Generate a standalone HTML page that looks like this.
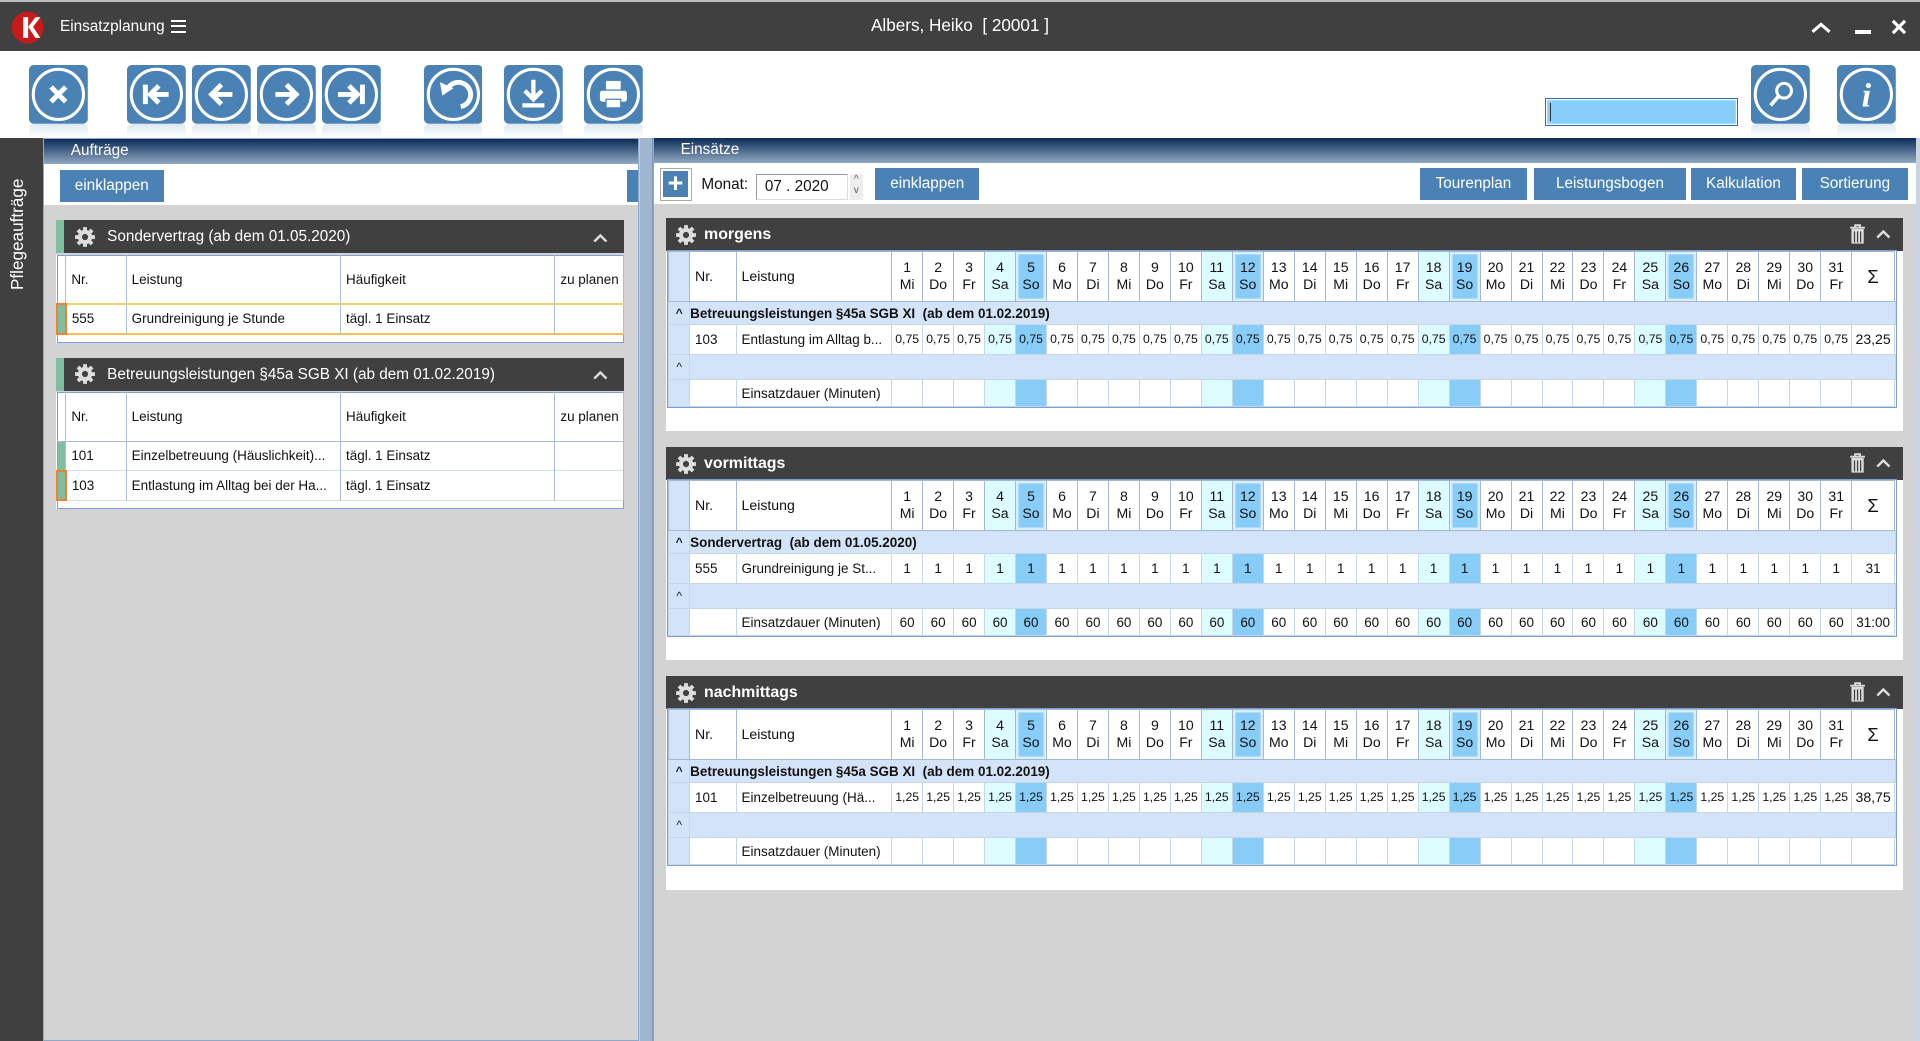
<!DOCTYPE html>
<html><head><meta charset="utf-8">
<style>
*{box-sizing:border-box;margin:0;padding:0}
html,body{width:1920px;height:1040px;overflow:hidden}
body{zoom:1.22449;width:1568px;height:850px;position:relative;background:#d3d3d3;font-family:"Liberation Sans",Arial,sans-serif;color:#111}
.abs{position:absolute}
#title{left:0;top:0;width:1568px;height:42px;background:#404040;border-top:2px solid #bdbdbd;color:#fff}
#tool{left:0;top:42px;width:1568px;height:71px;background:#fff}
.btn{position:absolute;top:11px;width:48px;height:60px}
.btn .r{position:absolute;left:0;top:48px;width:48px;height:12px;background:linear-gradient(#dfe8f1,#fff);border-radius:4px 4px 0 0}
.hdr{background:linear-gradient(#0b2c58,#90a8c2);color:#fff;font-size:12.5px;height:20px;line-height:20px;padding-left:22px}
.bb{position:absolute;background:#4a82b6;color:#fff;font-size:12.5px;text-align:center;line-height:26px;height:26px}
.gh{position:absolute;background:#404040;color:#fff;height:27px;line-height:27px}
.gear{display:inline-block;width:18px;height:18px;vertical-align:middle}
table{border-collapse:collapse;table-layout:fixed}
.lt{position:absolute;left:46px;width:464px;background:#fff;border:1px solid #7f9fd0;font-size:11px}
.lt td{border-right:1px solid #a9bcd8;padding-left:4px;white-space:nowrap;overflow:hidden}
.rt{width:1003px;font-size:11px}
.rt td{border:1px solid #c6d6ea;text-align:center;white-space:nowrap;overflow:hidden;padding:0}
.rt tr.hd td{border-color:#a4b8d4;height:41px;font-size:11.5px;line-height:14px}
.rt td.e{background:#d4e4f8}
.rt td.s{background:#dcfcff}
.rt td.u{background:#88cdf8}
.rt tr.hd td.u{box-shadow:inset 0 0 0 2px #d8eefc}
.rt tr.g td{background:#d4e4f8;height:19px;text-align:left;font-weight:bold;font-size:11px}
.rt tr.g td.e{text-align:center;font-size:10px;color:#123}
.rt tr.v td{height:24px;font-size:10px}
.rt tr.v.w td{font-size:11px}
.rt tr.m td{height:22px}
.rt td.l{text-align:left;padding-left:4px}
.rt tr.g2 td{background:#d4e4f8;height:21px}
.rt tr.g2 td.e{font-size:10px;color:#123}
.sec{position:absolute;left:544px;width:1010px;background:#fff}
.sec .gh{left:0;top:0;width:1010px;font-weight:bold;font-size:13px}
.sec .tw{position:absolute;left:1px;top:26px;border:1px solid #7f9fd0}
col.d{width:25.3px}
</style></head><body>

<div id="title" class="abs">
 <svg class="abs" style="left:9px;top:7px" width="27" height="27" viewBox="0 0 27 27"><circle cx="13.5" cy="13.5" r="13" fill="#c81a1a"/><path d="M10 5h4v17h-4z" fill="#fff"/><path d="M14 13l6-8h4l-6 8 6 9h-4z" fill="#fff"/></svg>
 <div class="abs" style="left:49px;top:13px;font-size:12.5px">Einsatzplanung</div>
 <div class="abs" style="left:140px;top:15px;width:12px;height:10px;border-top:2px solid #fff;border-bottom:2px solid #fff"><div style="margin-top:2px;height:2px;background:#fff"></div></div>
 <div class="abs" style="left:0;width:1568px;top:11px;text-align:center;font-size:14px">Albers, Heiko&nbsp; [ 20001 ]</div>
 <svg class="abs" style="left:1478px;top:16px" width="18" height="10"><path d="M2 8l7-6 7 6" stroke="#fff" stroke-width="2.5" fill="none"/></svg>
 <div class="abs" style="left:1515px;top:23px;width:13px;height:3px;background:#fff"></div>
 <svg class="abs" style="left:1544px;top:14px" width="13" height="13"><path d="M1.5 1.5l10 10M11.5 1.5l-10 10" stroke="#fff" stroke-width="2.6"/></svg>
</div>

<div id="tool" class="abs">
 <div class="btn" style="left:24px"><svg width="48" height="48"><rect width="48" height="48" rx="4" fill="#4a82b6"/><circle cx="24" cy="24" r="20.5" stroke="#fff" stroke-width="2.5" fill="none"/><path d="M18 18l12 12M30 18l-12 12" stroke="#fff" stroke-width="4"/></svg><div class="r"></div></div>
 <div class="btn" style="left:104px"><svg width="48" height="48"><rect width="48" height="48" rx="4" fill="#4a82b6"/><circle cx="24" cy="24" r="20.5" stroke="#fff" stroke-width="2.5" fill="none"/><path d="M15 16v16M34 24H20M26 17l-7 7 7 7" stroke="#fff" stroke-width="4" fill="none"/></svg><div class="r"></div></div>
 <div class="btn" style="left:157px"><svg width="48" height="48"><rect width="48" height="48" rx="4" fill="#4a82b6"/><circle cx="24" cy="24" r="20.5" stroke="#fff" stroke-width="2.5" fill="none"/><path d="M33 24H16M24 16l-8 8 8 8" stroke="#fff" stroke-width="4" fill="none"/></svg><div class="r"></div></div>
 <div class="btn" style="left:210px"><svg width="48" height="48"><rect width="48" height="48" rx="4" fill="#4a82b6"/><circle cx="24" cy="24" r="20.5" stroke="#fff" stroke-width="2.5" fill="none"/><path d="M15 24h17M24 16l8 8-8 8" stroke="#fff" stroke-width="4" fill="none"/></svg><div class="r"></div></div>
 <div class="btn" style="left:263px"><svg width="48" height="48"><rect width="48" height="48" rx="4" fill="#4a82b6"/><circle cx="24" cy="24" r="20.5" stroke="#fff" stroke-width="2.5" fill="none"/><path d="M13 24h15M22 17l7 7-7 7M33 16v16" stroke="#fff" stroke-width="4" fill="none"/></svg><div class="r"></div></div>
 <div class="btn" style="left:346px"><svg width="48" height="48"><rect width="48" height="48" rx="4" fill="#4a82b6"/><circle cx="24" cy="24" r="20.5" stroke="#fff" stroke-width="2.5" fill="none"/><path d="M30 34A10 10 0 1 0 19 20" stroke="#fff" stroke-width="4" fill="none"/><path d="M13 14l2 11 9-6z" fill="#fff"/></svg><div class="r"></div></div>
 <div class="btn" style="left:412px"><svg width="48" height="48"><rect width="48" height="48" rx="4" fill="#4a82b6"/><circle cx="24" cy="24" r="20.5" stroke="#fff" stroke-width="2.5" fill="none"/><path d="M24 12v15M17 21l7 7 7-7M15 33h18" stroke="#fff" stroke-width="3.5" fill="none"/></svg><div class="r"></div></div>
 <div class="btn" style="left:477px"><svg width="48" height="48"><rect width="48" height="48" rx="4" fill="#4a82b6"/><circle cx="24" cy="24" r="20.5" stroke="#fff" stroke-width="2.5" fill="none"/><rect x="18" y="13" width="12" height="7" fill="#fff"/><rect x="13" y="21" width="22" height="9" rx="2" fill="#fff"/><rect x="18" y="28" width="12" height="7" fill="#fff" stroke="#4a82b6" stroke-width="1"/></svg><div class="r"></div></div>
 <div class="abs" style="left:1262px;top:38px;width:157px;height:23px;border:1px solid #1e6fd0;background:#87cefa;box-shadow:inset 0 0 0 1px #fff"><div style="position:absolute;left:3px;top:3px;width:1px;height:15px;background:#333"></div></div>
 <div class="btn" style="left:1430px"><svg width="48" height="48"><rect width="48" height="48" rx="4" fill="#4a82b6"/><circle cx="24" cy="24" r="20.5" stroke="#fff" stroke-width="2.5" fill="none"/><circle cx="27" cy="21" r="6" stroke="#fff" stroke-width="2.5" fill="none"/><path d="M23 25l-7 8" stroke="#fff" stroke-width="3"/></svg><div class="r"></div></div>
 <div class="btn" style="left:1500px"><svg width="48" height="48"><rect width="48" height="48" rx="4" fill="#4a82b6"/><circle cx="24" cy="24" r="20.5" stroke="#fff" stroke-width="2.5" fill="none"/><text x="24" y="34" text-anchor="middle" font-family="Liberation Serif,serif" font-style="italic" font-weight="bold" font-size="28" fill="#fff">i</text></svg><div class="r"></div></div>
</div>

<!-- sidebar -->
<div class="abs" style="left:0;top:113px;width:35px;height:737px;background:#404040"></div>
<div class="abs" style="left:6px;top:237px;transform:rotate(-90deg);transform-origin:0 0;color:#fff;font-size:14px;width:120px">Pflegeaufträge</div>

<!-- left panel -->
<div class="abs" style="left:35px;top:113px;width:487px;height:737px;background:#d3d3d3;border:1px solid #8fa8c8">
 <div class="hdr">Aufträge</div>
 <div style="height:34px;background:#fff;position:relative">
  <div class="bb" style="left:13px;top:5px;width:85px">einklappen</div>
  <div class="abs" style="left:476px;top:5px;width:9px;height:26px;background:#4a82b6"></div>
 </div>
</div>
<div class="abs" style="left:522px;top:113px;width:11px;height:737px;background:#9fb5d0;border-left:1px solid #c0cfe0;border-right:1px solid #7f97b6"></div>

<div class="gh" style="left:46px;top:180px;width:464px;font-size:12.5px;border-left:7px solid #7fbf9f"><svg class="gear" style="margin:0 9px 0 8px" viewBox="0 0 20 20"><g fill="#ddd"><circle cx="10" cy="10" r="6.5"/><g stroke="#ddd" stroke-width="3.5"><path d="M10 1v18M1 10h18M3.6 3.6l12.8 12.8M16.4 3.6L3.6 16.4"/></g></g><circle cx="10" cy="10" r="2.8" fill="#404040"/></svg>Sondervertrag (ab dem 01.05.2020)<svg class="abs" style="left:432px;top:10px" width="12" height="8"><path d="M1 7l5-5 5 5" stroke="#ddd" stroke-width="2" fill="none"/></svg></div>
<table class="lt" style="top:208px;height:72px"><colgroup><col style="width:7px"><col style="width:49px"><col style="width:174px"><col style="width:174px"><col style="width:56px"></colgroup>
<tr style="height:40px"><td style="padding:0"></td><td>Nr.</td><td>Leistung</td><td>Häufigkeit</td><td>zu planen</td></tr>
<tr style="height:24px;border-top:2px solid #f5d070;border-bottom:2px solid #f5c050"><td style="padding:0;background:#7fbf9f;border:2px solid #f08030"></td><td>555</td><td>Grundreinigung je Stunde</td><td>tägl. 1 Einsatz</td><td></td></tr>
<tr><td colspan="5" style="border:0"></td></tr></table>

<div class="gh" style="left:46px;top:292px;width:464px;font-size:12.5px;border-left:7px solid #7fbf9f"><svg class="gear" style="margin:0 9px 0 8px" viewBox="0 0 20 20"><g fill="#ddd"><circle cx="10" cy="10" r="6.5"/><g stroke="#ddd" stroke-width="3.5"><path d="M10 1v18M1 10h18M3.6 3.6l12.8 12.8M16.4 3.6L3.6 16.4"/></g></g><circle cx="10" cy="10" r="2.8" fill="#404040"/></svg>Betreuungsleistungen §45a SGB XI (ab dem 01.02.2019)<svg class="abs" style="left:432px;top:10px" width="12" height="8"><path d="M1 7l5-5 5 5" stroke="#ddd" stroke-width="2" fill="none"/></svg></div>
<table class="lt" style="top:320px;height:96px"><colgroup><col style="width:7px"><col style="width:49px"><col style="width:174px"><col style="width:174px"><col style="width:56px"></colgroup>
<tr style="height:40px;border-bottom:1px solid #a9bcd8"><td style="padding:0"></td><td>Nr.</td><td>Leistung</td><td>Häufigkeit</td><td>zu planen</td></tr>
<tr style="height:24px;border-bottom:1px solid #d4e0ee"><td style="padding:0;background:#7fbf9f"></td><td>101</td><td>Einzelbetreuung (Häuslichkeit)...</td><td>tägl. 1 Einsatz</td><td></td></tr>
<tr style="height:24px;border-bottom:1px solid #d4e0ee"><td style="padding:0;background:#7fbf9f;border:2px solid #f08030"></td><td>103</td><td>Entlastung im Alltag bei der Ha...</td><td>tägl. 1 Einsatz</td><td></td></tr>
<tr><td colspan="5" style="border:0"></td></tr></table>

<!-- right panel -->
<div class="abs" style="left:533px;top:113px;width:1035px;height:737px;background:#d3d3d3;border-left:1px solid #8fa8c8">
 <div class="hdr">Einsätze</div>
 <div style="height:34px;background:#fff;position:relative">
  <div class="abs" style="left:5px;top:4px;width:26px;height:27px;border:1px solid #aaa;padding:2px"><div style="background:#4a82b6;color:#fff;width:20px;height:21px;text-align:center;font-size:22px;line-height:20px;font-weight:bold">+</div></div>
  <div class="abs" style="left:39px;top:11px;font-size:12.5px">Monat:</div>
  <div class="abs" style="left:84px;top:9px;width:75px;height:21px;border:1px solid #999;border-right-color:#ddd;border-bottom-color:#ddd;font-size:12.5px;line-height:20px;padding-left:6px">07 . 2020</div>
  <div class="abs" style="left:160px;top:9px;width:11px;height:21px;background:#eee;font-size:8px;line-height:9px;text-align:center;color:#555">^<br>v</div>
  <div class="bb" style="left:181px;top:4px;width:85px">einklappen</div>
  <div class="bb" style="left:626px;top:4px;width:87px">Tourenplan</div>
  <div class="bb" style="left:719px;top:4px;width:124px">Leistungsbogen</div>
  <div class="bb" style="left:847px;top:4px;width:86px">Kalkulation</div>
  <div class="bb" style="left:938px;top:4px;width:86px">Sortierung</div>
 </div>
</div>

<!-- morgens -->
<div class="sec" style="top:178px;height:174px">
 <div class="gh"><svg class="gear" style="margin:0 6px 0 7px" viewBox="0 0 20 20"><g fill="#ddd"><circle cx="10" cy="10" r="6.5"/><g stroke="#ddd" stroke-width="3.5"><path d="M10 1v18M1 10h18M3.6 3.6l12.8 12.8M16.4 3.6L3.6 16.4"/></g></g><circle cx="10" cy="10" r="2.8" fill="#404040"/></svg>morgens
  <svg class="abs" style="left:966px;top:5px" width="14" height="17"><path d="M1 3h12M5 3V1h4v2" stroke="#ddd" stroke-width="1.5" fill="none"/><rect x="2" y="4" width="10" height="12" fill="#ddd"/><path d="M4.5 6v9M7 6v9M9.5 6v9" stroke="#404040" stroke-width="1"/></svg>
  <svg class="abs" style="left:988px;top:9px" width="12" height="8"><path d="M1 7l5-5 5 5" stroke="#ddd" stroke-width="2" fill="none"/></svg></div>
 <div class="tw"><table class="rt"><colgroup><col style="width:17px"><col style="width:38px"><col style="width:127px"><col class=d><col class=d><col class=d><col class=d><col class=d><col class=d><col class=d><col class=d><col class=d><col class=d><col class=d><col class=d><col class=d><col class=d><col class=d><col class=d><col class=d><col class=d><col class=d><col class=d><col class=d><col class=d><col class=d><col class=d><col class=d><col class=d><col class=d><col class=d><col class=d><col class=d><col class=d><col style="width:35px"></colgroup>
 <tr class="hd"><td class="e"></td><td class="l">Nr.</td><td class="l">Leistung</td><td>1<br>Mi</td><td>2<br>Do</td><td>3<br>Fr</td><td class=s>4<br>Sa</td><td class=u>5<br>So</td><td>6<br>Mo</td><td>7<br>Di</td><td>8<br>Mi</td><td>9<br>Do</td><td>10<br>Fr</td><td class=s>11<br>Sa</td><td class=u>12<br>So</td><td>13<br>Mo</td><td>14<br>Di</td><td>15<br>Mi</td><td>16<br>Do</td><td>17<br>Fr</td><td class=s>18<br>Sa</td><td class=u>19<br>So</td><td>20<br>Mo</td><td>21<br>Di</td><td>22<br>Mi</td><td>23<br>Do</td><td>24<br>Fr</td><td class=s>25<br>Sa</td><td class=u>26<br>So</td><td>27<br>Mo</td><td>28<br>Di</td><td>29<br>Mi</td><td>30<br>Do</td><td>31<br>Fr</td><td style="font-size:15px">Σ</td></tr>
 <tr class="g"><td class="e">^</td><td colspan="35">Betreuungsleistungen §45a SGB XI&nbsp; (ab dem 01.02.2019)</td></tr>
 <tr class="v"><td class="e"></td><td class="l" style="font-size:11px">103</td><td class="l" style="font-size:11px">Entlastung im Alltag b...</td><td>0,75</td><td>0,75</td><td>0,75</td><td class=s>0,75</td><td class=u>0,75</td><td>0,75</td><td>0,75</td><td>0,75</td><td>0,75</td><td>0,75</td><td class=s>0,75</td><td class=u>0,75</td><td>0,75</td><td>0,75</td><td>0,75</td><td>0,75</td><td>0,75</td><td class=s>0,75</td><td class=u>0,75</td><td>0,75</td><td>0,75</td><td>0,75</td><td>0,75</td><td>0,75</td><td class=s>0,75</td><td class=u>0,75</td><td>0,75</td><td>0,75</td><td>0,75</td><td>0,75</td><td>0,75</td><td style="font-size:11.5px">23,25</td></tr>
 <tr class="g2"><td class="e">^</td><td colspan="35"></td></tr>
 <tr class="m"><td class="e"></td><td></td><td class="l">Einsatzdauer (Minuten)</td><td></td><td></td><td></td><td class=s></td><td class=u></td><td></td><td></td><td></td><td></td><td></td><td class=s></td><td class=u></td><td></td><td></td><td></td><td></td><td></td><td class=s></td><td class=u></td><td></td><td></td><td></td><td></td><td></td><td class=s></td><td class=u></td><td></td><td></td><td></td><td></td><td></td><td></td></tr>
 </table></div>
</div>

<!-- vormittags -->
<div class="sec" style="top:365px;height:174px">
 <div class="gh"><svg class="gear" style="margin:0 6px 0 7px" viewBox="0 0 20 20"><g fill="#ddd"><circle cx="10" cy="10" r="6.5"/><g stroke="#ddd" stroke-width="3.5"><path d="M10 1v18M1 10h18M3.6 3.6l12.8 12.8M16.4 3.6L3.6 16.4"/></g></g><circle cx="10" cy="10" r="2.8" fill="#404040"/></svg>vormittags
  <svg class="abs" style="left:966px;top:5px" width="14" height="17"><path d="M1 3h12M5 3V1h4v2" stroke="#ddd" stroke-width="1.5" fill="none"/><rect x="2" y="4" width="10" height="12" fill="#ddd"/><path d="M4.5 6v9M7 6v9M9.5 6v9" stroke="#404040" stroke-width="1"/></svg>
  <svg class="abs" style="left:988px;top:9px" width="12" height="8"><path d="M1 7l5-5 5 5" stroke="#ddd" stroke-width="2" fill="none"/></svg></div>
 <div class="tw"><table class="rt"><colgroup><col style="width:17px"><col style="width:38px"><col style="width:127px"><col class=d><col class=d><col class=d><col class=d><col class=d><col class=d><col class=d><col class=d><col class=d><col class=d><col class=d><col class=d><col class=d><col class=d><col class=d><col class=d><col class=d><col class=d><col class=d><col class=d><col class=d><col class=d><col class=d><col class=d><col class=d><col class=d><col class=d><col class=d><col class=d><col class=d><col class=d><col style="width:35px"></colgroup>
 <tr class="hd"><td class="e"></td><td class="l">Nr.</td><td class="l">Leistung</td><td>1<br>Mi</td><td>2<br>Do</td><td>3<br>Fr</td><td class=s>4<br>Sa</td><td class=u>5<br>So</td><td>6<br>Mo</td><td>7<br>Di</td><td>8<br>Mi</td><td>9<br>Do</td><td>10<br>Fr</td><td class=s>11<br>Sa</td><td class=u>12<br>So</td><td>13<br>Mo</td><td>14<br>Di</td><td>15<br>Mi</td><td>16<br>Do</td><td>17<br>Fr</td><td class=s>18<br>Sa</td><td class=u>19<br>So</td><td>20<br>Mo</td><td>21<br>Di</td><td>22<br>Mi</td><td>23<br>Do</td><td>24<br>Fr</td><td class=s>25<br>Sa</td><td class=u>26<br>So</td><td>27<br>Mo</td><td>28<br>Di</td><td>29<br>Mi</td><td>30<br>Do</td><td>31<br>Fr</td><td style="font-size:15px">Σ</td></tr>
 <tr class="g"><td class="e">^</td><td colspan="35">Sondervertrag&nbsp; (ab dem 01.05.2020)</td></tr>
 <tr class="v w"><td class="e"></td><td class="l">555</td><td class="l">Grundreinigung je St...</td><td>1</td><td>1</td><td>1</td><td class=s>1</td><td class=u>1</td><td>1</td><td>1</td><td>1</td><td>1</td><td>1</td><td class=s>1</td><td class=u>1</td><td>1</td><td>1</td><td>1</td><td>1</td><td>1</td><td class=s>1</td><td class=u>1</td><td>1</td><td>1</td><td>1</td><td>1</td><td>1</td><td class=s>1</td><td class=u>1</td><td>1</td><td>1</td><td>1</td><td>1</td><td>1</td><td>31</td></tr>
 <tr class="g2"><td class="e">^</td><td colspan="35"></td></tr>
 <tr class="m v w"><td class="e"></td><td></td><td class="l">Einsatzdauer (Minuten)</td><td>60</td><td>60</td><td>60</td><td class=s>60</td><td class=u>60</td><td>60</td><td>60</td><td>60</td><td>60</td><td>60</td><td class=s>60</td><td class=u>60</td><td>60</td><td>60</td><td>60</td><td>60</td><td>60</td><td class=s>60</td><td class=u>60</td><td>60</td><td>60</td><td>60</td><td>60</td><td>60</td><td class=s>60</td><td class=u>60</td><td>60</td><td>60</td><td>60</td><td>60</td><td>60</td><td>31:00</td></tr>
 </table></div>
</div>

<!-- nachmittags -->
<div class="sec" style="top:552px;height:175px">
 <div class="gh"><svg class="gear" style="margin:0 6px 0 7px" viewBox="0 0 20 20"><g fill="#ddd"><circle cx="10" cy="10" r="6.5"/><g stroke="#ddd" stroke-width="3.5"><path d="M10 1v18M1 10h18M3.6 3.6l12.8 12.8M16.4 3.6L3.6 16.4"/></g></g><circle cx="10" cy="10" r="2.8" fill="#404040"/></svg>nachmittags
  <svg class="abs" style="left:966px;top:5px" width="14" height="17"><path d="M1 3h12M5 3V1h4v2" stroke="#ddd" stroke-width="1.5" fill="none"/><rect x="2" y="4" width="10" height="12" fill="#ddd"/><path d="M4.5 6v9M7 6v9M9.5 6v9" stroke="#404040" stroke-width="1"/></svg>
  <svg class="abs" style="left:988px;top:9px" width="12" height="8"><path d="M1 7l5-5 5 5" stroke="#ddd" stroke-width="2" fill="none"/></svg></div>
 <div class="tw"><table class="rt"><colgroup><col style="width:17px"><col style="width:38px"><col style="width:127px"><col class=d><col class=d><col class=d><col class=d><col class=d><col class=d><col class=d><col class=d><col class=d><col class=d><col class=d><col class=d><col class=d><col class=d><col class=d><col class=d><col class=d><col class=d><col class=d><col class=d><col class=d><col class=d><col class=d><col class=d><col class=d><col class=d><col class=d><col class=d><col class=d><col class=d><col class=d><col style="width:35px"></colgroup>
 <tr class="hd"><td class="e"></td><td class="l">Nr.</td><td class="l">Leistung</td><td>1<br>Mi</td><td>2<br>Do</td><td>3<br>Fr</td><td class=s>4<br>Sa</td><td class=u>5<br>So</td><td>6<br>Mo</td><td>7<br>Di</td><td>8<br>Mi</td><td>9<br>Do</td><td>10<br>Fr</td><td class=s>11<br>Sa</td><td class=u>12<br>So</td><td>13<br>Mo</td><td>14<br>Di</td><td>15<br>Mi</td><td>16<br>Do</td><td>17<br>Fr</td><td class=s>18<br>Sa</td><td class=u>19<br>So</td><td>20<br>Mo</td><td>21<br>Di</td><td>22<br>Mi</td><td>23<br>Do</td><td>24<br>Fr</td><td class=s>25<br>Sa</td><td class=u>26<br>So</td><td>27<br>Mo</td><td>28<br>Di</td><td>29<br>Mi</td><td>30<br>Do</td><td>31<br>Fr</td><td style="font-size:15px">Σ</td></tr>
 <tr class="g"><td class="e">^</td><td colspan="35">Betreuungsleistungen §45a SGB XI&nbsp; (ab dem 01.02.2019)</td></tr>
 <tr class="v"><td class="e"></td><td class="l" style="font-size:11px">101</td><td class="l" style="font-size:11px">Einzelbetreuung (Hä...</td><td>1,25</td><td>1,25</td><td>1,25</td><td class=s>1,25</td><td class=u>1,25</td><td>1,25</td><td>1,25</td><td>1,25</td><td>1,25</td><td>1,25</td><td class=s>1,25</td><td class=u>1,25</td><td>1,25</td><td>1,25</td><td>1,25</td><td>1,25</td><td>1,25</td><td class=s>1,25</td><td class=u>1,25</td><td>1,25</td><td>1,25</td><td>1,25</td><td>1,25</td><td>1,25</td><td class=s>1,25</td><td class=u>1,25</td><td>1,25</td><td>1,25</td><td>1,25</td><td>1,25</td><td>1,25</td><td style="font-size:11.5px">38,75</td></tr>
 <tr class="g2"><td class="e">^</td><td colspan="35"></td></tr>
 <tr class="m"><td class="e"></td><td></td><td class="l">Einsatzdauer (Minuten)</td><td></td><td></td><td></td><td class=s></td><td class=u></td><td></td><td></td><td></td><td></td><td></td><td class=s></td><td class=u></td><td></td><td></td><td></td><td></td><td></td><td class=s></td><td class=u></td><td></td><td></td><td></td><td></td><td></td><td class=s></td><td class=u></td><td></td><td></td><td></td><td></td><td></td><td></td></tr>
 </table></div>
</div>

<div class="abs" style="left:1565px;top:113px;width:3px;height:737px;background:#c8d4e2"></div>
</body></html>
